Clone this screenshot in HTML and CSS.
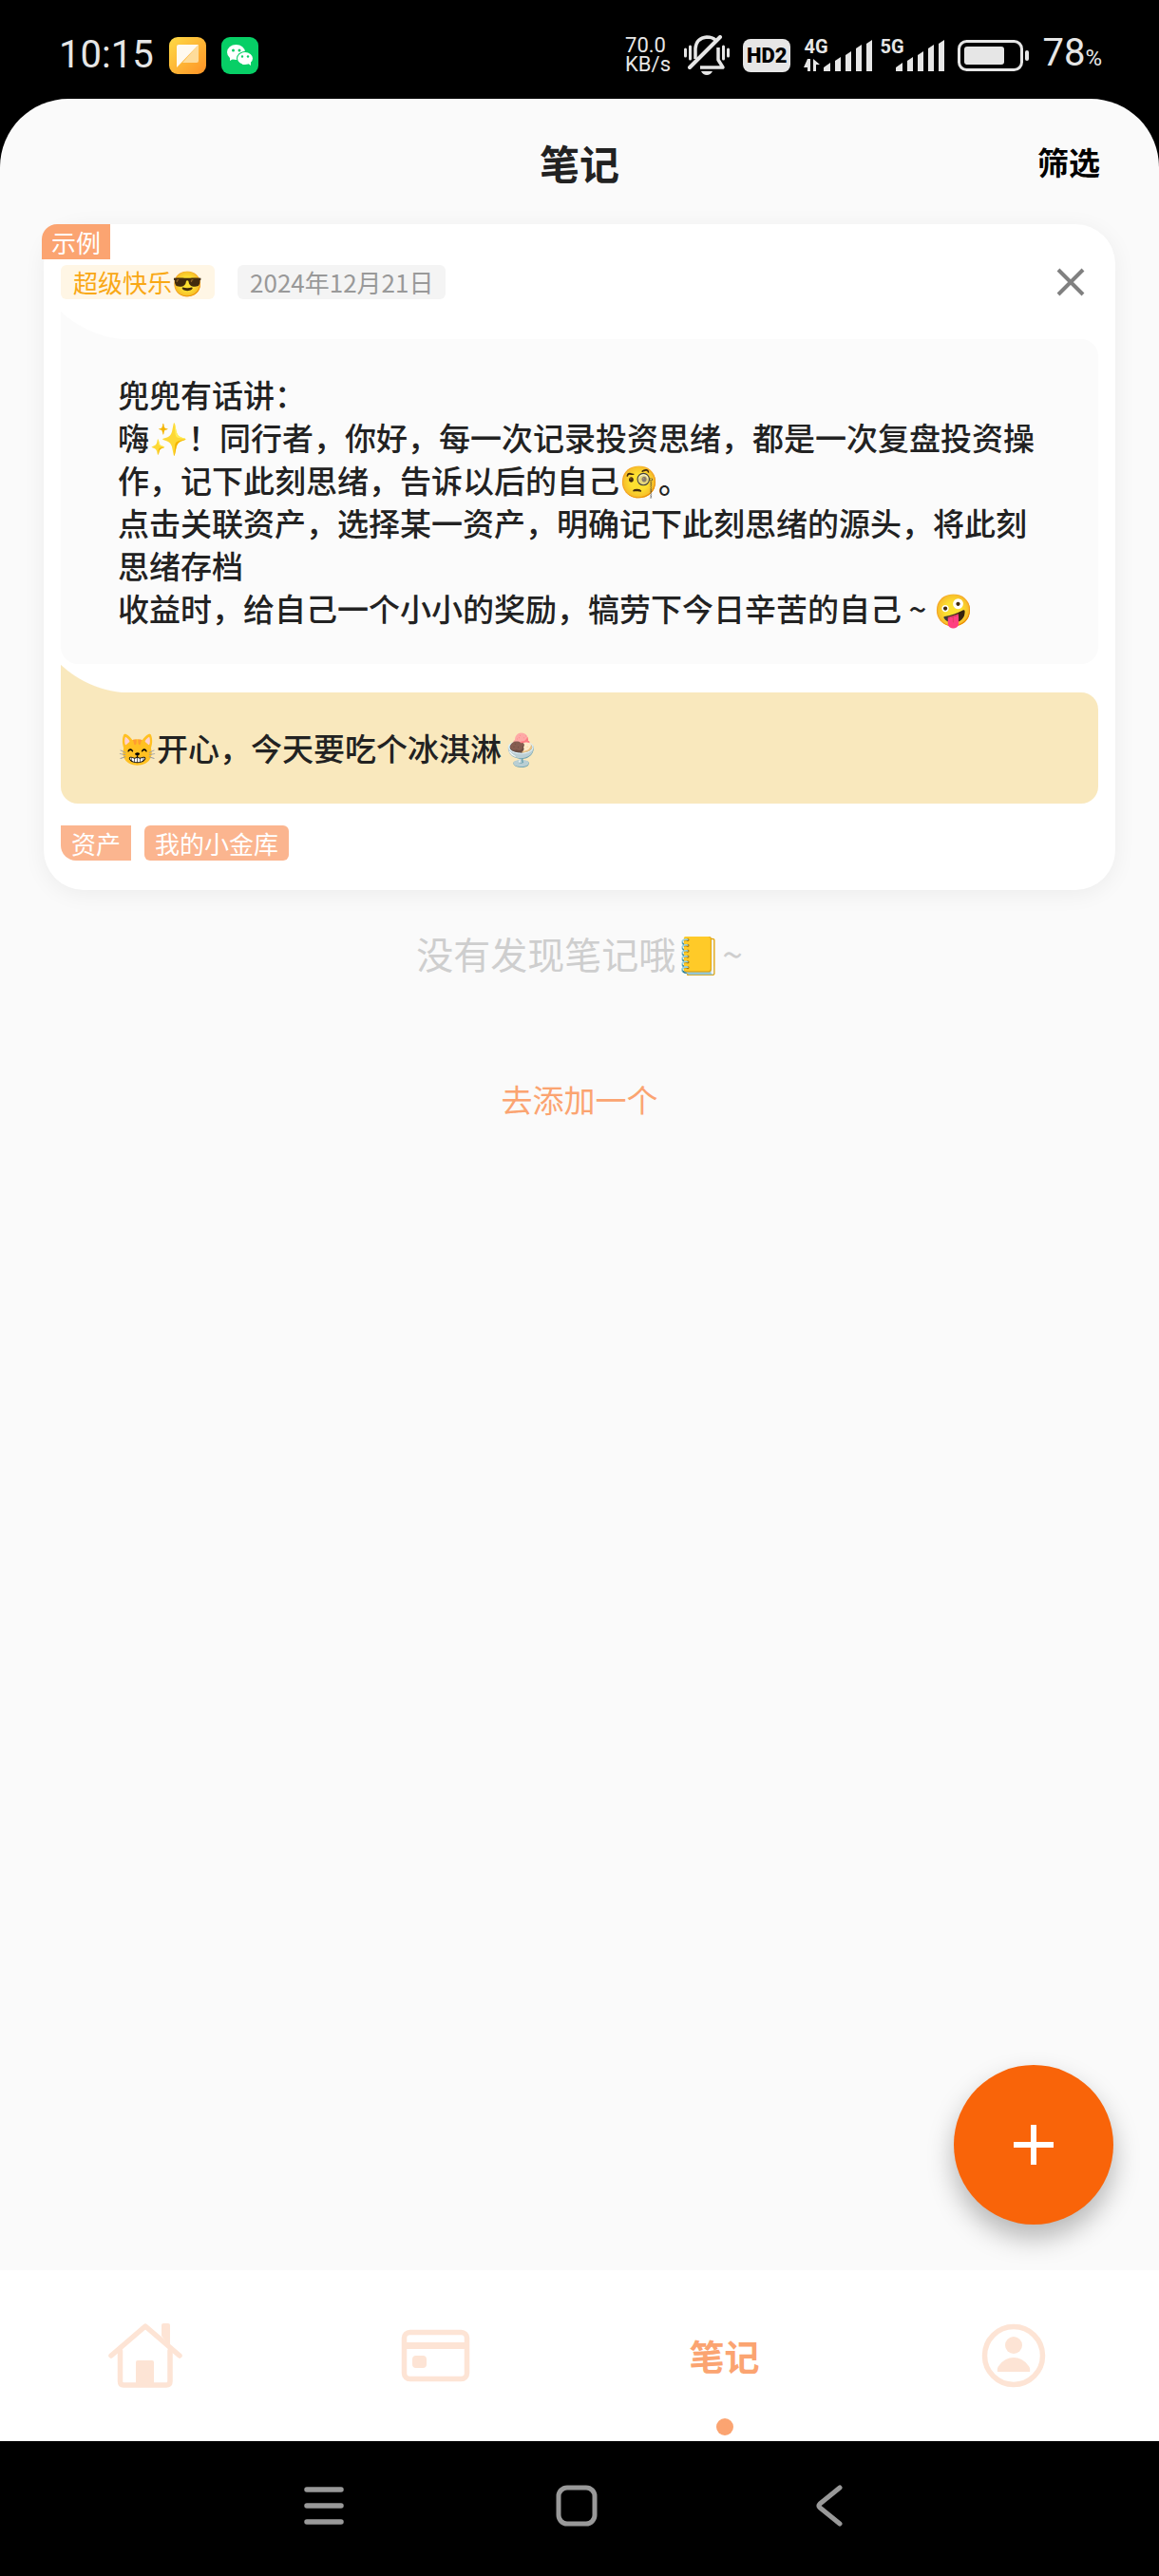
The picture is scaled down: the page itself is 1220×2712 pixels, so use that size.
FILE: index.html
```html
<!DOCTYPE html>
<html lang="zh-CN">
  <head>
    <meta charset="UTF-8" />
    <meta name="viewport" content="width=device-width, initial-scale=1.0" />
    <title>笔记</title>
    <link rel="stylesheet" href="styles.css" />
  </head>
  <body>
    <!-- Status bar -->
    <div class="status-bar">
      <div class="status-left">
        <span class="clock">10:15</span>
        <svg class="app-icon" viewBox="0 0 39 39">
          <defs>
            <linearGradient id="sun" x1="0" y1="0" x2="1" y2="1">
              <stop offset="0" stop-color="#fedb45" />
              <stop offset="1" stop-color="#fe9226" />
            </linearGradient>
          </defs>
          <rect width="39" height="39" rx="9" fill="url(#sun)" />
          <path d="M14 27 L31 8 V25 Q31 27 29 27 Z" fill="#fedc9a" />
          <path d="M8 32 V10 Q8 8 10 8 H31 Z" fill="#fffaf0" />
        </svg>
        <svg class="app-icon" viewBox="0 0 39 39">
          <rect width="39" height="39" rx="9" fill="#07cf66" />
          <path d="M9 20 L9 25 L14 22 Z" fill="#fff" />
          <ellipse cx="15.500" cy="16" rx="9.500" ry="8" fill="#fff" />
          <circle cx="12.500" cy="14" r="1.500" fill="#07cf66" />
          <circle cx="19" cy="14" r="1.500" fill="#07cf66" />
          <ellipse cx="25" cy="22.500" rx="9" ry="7.500" fill="#07cf66" />
          <path d="M27 27 L31 30 L31 25 Z" fill="#fff" />
          <ellipse cx="25" cy="22.500" rx="8" ry="6.500" fill="#fff" />
          <circle cx="22" cy="20.500" r="1.200" fill="#07cf66" />
          <circle cx="28" cy="20.500" r="1.200" fill="#07cf66" />
        </svg>
      </div>

      <div class="status-right">
        <span class="net-speed">70.0<br />KB/s</span>
        <svg class="bell" viewBox="0 0 48 42" fill="none" stroke="#e6e6e6">
          <path d="M1.500 15 V22 M6.500 12 V25 M46.500 15 V22 M41.500 12 V25" stroke-width="3" stroke-linecap="round" />
          <path d="M12 25 V14 Q13 3 24 2 Q30 2 33 5" stroke-width="3.500" />
          <path d="M36 13 V26 L41 34 H17" stroke-width="3.500" stroke-linejoin="round" />
          <path d="M38 2 L6 34" stroke-width="4" stroke-linecap="round" />
          <path d="M18 38 H30 Q28 42 24 42 Q20 42 18 38 Z" fill="#e6e6e6" stroke="none" />
        </svg>
        <span class="hd">HD2</span>
        <div class="signals">
          <span class="signal signal-4g">
            <span class="signal-name">4G</span>
            <svg class="arrows" viewBox="0 0 17 13" fill="#e6e6e6">
              <path d="M4 0 H7 V13 H4 V9 H0 Z M10 13 V0 L17 6 H13 V13 Z" />
            </svg>
            <svg class="bars" viewBox="0 0 51 33" fill="#e6e6e6">
              <path d="M0 33 V29 L7 24 V33 Z M12 33 V22 L18 18 V33 Z M23 33 V16 L29 12 V33 Z M34 33 V9 L40 5 V33 Z M45 33 V4 L51 0 V33 Z" />
            </svg>
          </span>
          <span class="signal">
            <span class="signal-name">5G</span>
            <svg class="bars" viewBox="0 0 51 33" fill="#e6e6e6">
              <path d="M0 33 V29 L7 24 V33 Z M12 33 V22 L18 18 V33 Z M23 33 V16 L29 12 V33 Z M34 33 V9 L40 5 V33 Z M45 33 V4 L51 0 V33 Z" />
            </svg>
          </span>
        </div>
        <svg class="battery" viewBox="0 0 75 33">
          <rect x="1.500" y="1.500" width="66" height="30" rx="8" fill="none" stroke="#e6e6e6" stroke-width="3" />
          <rect x="7" y="7" width="42" height="19" rx="3" fill="#e6e6e6" />
          <rect x="71" y="11" width="4" height="11" rx="2" fill="#e6e6e6" />
        </svg>
        <span class="percent">78<small>%</small></span>
      </div>
    </div>

    <div class="app">
      <header class="header">
        <h1 class="title">笔记</h1>
        <button class="filter">筛选</button>
      </header>

      <main class="main">
        <article class="note">
          <span class="badge">示例</span>
          <div class="note-head">
            <span class="mood">超级快乐😎</span>
            <time class="date" datetime="2024-12-21">2024年12月21日</time>
            <button class="close" aria-label="关闭">
              <svg viewBox="0 0 30 30" stroke="#808080" stroke-width="4">
                <path d="M2 2 L28 28 M28 2 L2 28" />
              </svg>
            </button>
          </div>

          <div class="bubble">
            <p>兜兜有话讲：</p>
            <p>嗨✨！同行者，你好，每一次记录投资思绪，都是一次复盘投资操作，记下此刻思绪，告诉以后的自己🧐。</p>
            <p>点击关联资产，选择某一资产，明确记下此刻思绪的源头，将此刻思绪存档</p>
            <p>收益时，给自己一个小小的奖励，犒劳下今日辛苦的自己 ~ 🤪</p>
          </div>
          <div class="bubble bubble-happy">
            <p>😸开心，今天要吃个冰淇淋🍨</p>
          </div>

          <div class="tags">
            <span class="tag tag-type">资产</span>
            <span class="tag">我的小金库</span>
          </div>
        </article>

        <p class="empty">没有发现笔记哦📒~</p>
        <a class="add-link" href="#">去添加一个</a>

        <button class="fab" aria-label="添加">
          <svg viewBox="0 0 42 42" stroke="#fff" stroke-width="6">
            <path d="M21 0 V42 M0 21 H42" />
          </svg>
        </button>
      </main>

      <nav class="tab-bar">
        <a class="tab" href="#" aria-label="首页">
          <svg class="tab-icon" viewBox="0 0 78 70" fill="none" stroke="#fde4d5" stroke-width="5.500" stroke-linecap="round" stroke-linejoin="round">
            <path d="M3 35 L39 4 L75 35" />
            <path d="M12.500 30 V62 Q12.500 66 16 66 H61 Q65 66 65 62 V30" />
            <rect x="29" y="40" width="19" height="26" rx="2" fill="#fde4d5" stroke="none" />
            <path d="M56 14 V3 Q56 1 58 1 H63 Q65 1 65 3 V26 Z" fill="#fde4d5" stroke="none" />
          </svg>
        </a>
        <a class="tab" href="#" aria-label="资产">
          <svg class="tab-icon" viewBox="0 0 78 70" fill="none" stroke="#fde4d5" stroke-width="5.500">
            <rect x="6.500" y="10.500" width="66" height="49" rx="6" />
            <path d="M6 24.500 H73" stroke-width="7" />
            <rect x="15" y="35" width="15" height="13" rx="4" fill="#fde4d5" stroke="none" />
          </svg>
        </a>
        <a class="tab tab-active" href="#" aria-current="page">笔记</a>
        <a class="tab" href="#" aria-label="我的">
          <svg class="tab-icon" viewBox="0 0 78 70">
            <circle cx="38" cy="35" r="30.500" fill="none" stroke="#fde4d5" stroke-width="5.500" />
            <circle cx="38" cy="24" r="9" fill="#fde4d5" />
            <path d="M21 52 Q20 48 23 45 Q29 37 38 37 Q47 37 53 45 Q56 48 55 52 Z" fill="#fde4d5" />
          </svg>
        </a>
      </nav>
    </div>

    <!-- System keys -->
    <div class="sys-bar">
      <button class="sys-key" aria-label="菜单">
        <svg viewBox="0 0 44 44" fill="none" stroke="#999" stroke-width="5.500" stroke-linecap="round">
          <path d="M4 5 H40 M4 22 H40 M4 39 H40" />
        </svg>
      </button>
      <button class="sys-key" aria-label="主页">
        <svg viewBox="0 0 44 44" fill="none" stroke="#999" stroke-width="5">
          <rect x="3" y="3" width="38" height="38" rx="9" />
        </svg>
      </button>
      <button class="sys-key" aria-label="返回">
        <svg viewBox="0 0 44 44" fill="none" stroke="#999" stroke-width="5" stroke-linecap="round" stroke-linejoin="round">
          <path d="M33 3 L12 20 Q10 22 12 24 L33 41" />
        </svg>
      </button>
    </div>
  </body>
</html>
```

FILE: styles.css
```css
* {
  box-sizing: border-box;
}

body {
  margin: 0;
  min-height: 100vh;
  display: flex;
  flex-direction: column;
  background-color: #000;
  color: #222;
  font-family: "Noto Sans CJK SC", sans-serif;
}

p,
h1 {
  margin: 0;
}

a {
  text-decoration: none;
}

svg {
  display: block;
}

button {
  padding: 0;
  border: none;
  background: none;
  font-family: inherit;
  cursor: pointer;
}

/* Status bar */
.status-bar {
  height: 104px;
  padding: 12px 60px 0 62px;
  display: flex;
  justify-content: space-between;
  align-items: center;
  color: #e6e6e6;
  font-family: Roboto, sans-serif;
}

.status-left,
.status-right {
  display: flex;
  align-items: center;
}

.status-left {
  gap: 16px;
}

.status-right {
  gap: 14px;
}

.clock,
.percent {
  font-size: 40px;
  line-height: 48px;
}

.percent small {
  font-size: 24px;
}

.app-icon {
  width: 39px;
  height: 39px;
}

.net-speed {
  font-size: 22px;
  line-height: 20px;
}

.bell {
  width: 48px;
  height: 42px;
}

.hd {
  padding: 0 4px;
  border-radius: 8px;
  background-color: #e6e6e6;
  color: #000;
  font-size: 22px;
  font-weight: 900;
  line-height: 35px;
}

.signals {
  display: flex;
  gap: 8px;
}

.signal {
  position: relative;
  width: 68px;
  height: 33px;
  display: flex;
  justify-content: flex-end;
}

.signal-4g {
  width: 72px;
}

.signal-name {
  position: absolute;
  top: -3px;
  left: 0;
  font-size: 20px;
  font-weight: 700;
  line-height: 20px;
}

.arrows {
  position: absolute;
  left: 0;
  bottom: 0;
  width: 17px;
  height: 13px;
}

.bars {
  width: 51px;
  height: 33px;
}

.battery {
  width: 75px;
  height: 33px;
}

/* App */
.app {
  flex: 1;
  display: flex;
  flex-direction: column;
  overflow: hidden;
  border-radius: 72px 72px 0 0;
  background-color: #fafafa;
}

.header {
  height: 132px;
  padding: 0 62px;
  display: grid;
  grid-template-columns: 1fr auto 1fr;
  align-items: center;
}

.title {
  grid-column: 2;
  font-size: 42px;
  font-weight: 700;
}

.filter {
  justify-self: end;
  color: #000;
  font-size: 33px;
  font-weight: 700;
}

.main {
  flex: 1;
  position: relative;
  padding: 0 46px;
  display: flex;
  flex-direction: column;
  align-items: center;
}

/* Note card */
.note {
  position: relative;
  width: 100%;
  padding: 43px 18px 31px;
  border-radius: 42px;
  background-color: #fff;
  box-shadow: 0 4px 24px rgba(0, 0, 0, 0.06);
}

.badge {
  position: absolute;
  top: 0;
  left: -2px;
  padding: 0 10px;
  border-radius: 16px 0 0 0;
  background-color: #fba471;
  color: #fff;
  font-size: 26px;
  line-height: 37px;
}

.note-head {
  display: flex;
  align-items: center;
  margin-bottom: 42px;
  font-size: 26px;
  line-height: 36px;
}

.mood,
.date {
  padding: 0 13px;
  border-radius: 6px;
}

.mood {
  margin-right: 24px;
  background-color: #fff6e5;
  color: #f9a815;
}

.date {
  background-color: #f4f4f4;
  color: #999;
}

.close {
  margin: 0 14px 0 auto;
}

.close svg {
  width: 30px;
  height: 30px;
}

.bubble {
  --fill: #fbfbfb;
  position: relative;
  padding: 36px 60px;
  border-radius: 0 18px 18px 18px;
  background-color: var(--fill);
  font-size: 33px;
  font-weight: 500;
  line-height: 45px;
}

/* curved tail on the top left corner */
.bubble::before {
  content: "";
  position: absolute;
  bottom: 100%;
  left: 0;
  width: 75px;
  height: 30px;
  background: radial-gradient(circle at 75px -79px, transparent 109px, var(--fill) 110px);
}

.bubble-happy {
  --fill: #f9e8bd;
  margin-top: 30px;
}

.tags {
  display: flex;
  gap: 14px;
  margin-top: 23px;
}

.tag {
  padding: 0 11px;
  border-radius: 6px;
  background-color: #fbb58f;
  color: #fff;
  font-size: 26px;
  line-height: 37px;
}

.tag-type {
  border-radius: 0 0 0 16px;
}

/* Empty state */
.empty {
  margin-top: 40px;
  color: #cecece;
  font-size: 39px;
  line-height: 52px;
}

.add-link {
  margin-top: 104px;
  color: #fba471;
  font-size: 33px;
  line-height: 48px;
}

.fab {
  position: absolute;
  right: 48px;
  bottom: 48px;
  width: 168px;
  height: 168px;
  display: grid;
  place-items: center;
  border-radius: 50%;
  background-color: #f96409;
  box-shadow: 0 14px 28px rgba(0, 0, 0, 0.28);
}

.fab svg {
  width: 42px;
  height: 42px;
}

/* Tab bar */
.tab-bar {
  height: 180px;
  display: grid;
  grid-template-columns: repeat(4, 1fr);
  background-color: #fff;
}

.tab {
  position: relative;
  display: grid;
  place-items: center;
  color: #fba471;
  font-size: 37px;
  font-weight: 700;
}

.tab-icon {
  width: 78px;
  height: 70px;
}

.tab-active::after {
  content: "";
  position: absolute;
  bottom: 6px;
  width: 18px;
  height: 18px;
  border-radius: 50%;
  background-color: #fba471;
}

/* System keys */
.sys-bar {
  height: 142px;
  padding: 0 6px 6px 0;
  display: flex;
  justify-content: center;
  align-items: center;
  gap: 222px;
}

.sys-key svg {
  width: 44px;
  height: 44px;
}
```
